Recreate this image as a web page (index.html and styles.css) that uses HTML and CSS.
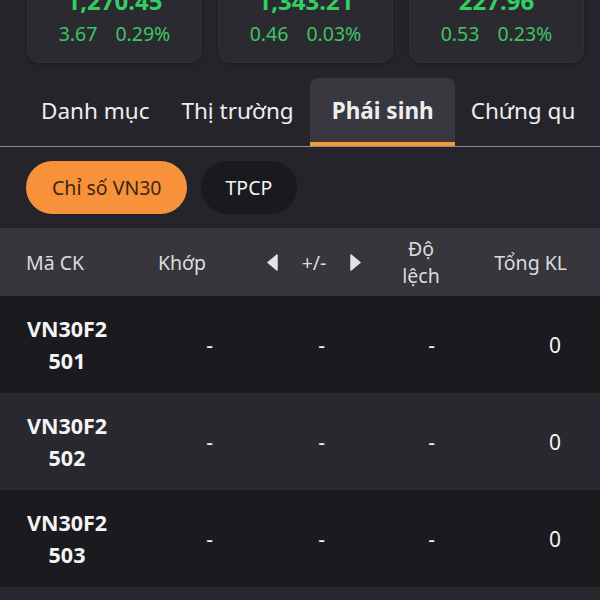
FILE: index.html
```html
<!DOCTYPE html>
<html lang="vi">
<head>
<meta charset="utf-8">
<link rel="stylesheet" href="styles.css">
</head>
<body>
<div class="cards">
  <div class="card"><div class="val">1,270.45</div><div class="chg"><span>3.67</span><span>0.29%</span></div></div>
  <div class="card"><div class="val">1,343.21</div><div class="chg"><span>0.46</span><span>0.03%</span></div></div>
  <div class="card"><div class="val">227.96</div><div class="chg"><span>0.53</span><span>0.23%</span></div></div>
</div>

<div class="tabbar">
  <div class="tabs">
    <div class="tab">Danh mục</div>
    <div class="tab">Thị trường</div>
    <div class="tab active">Phái sinh</div>
    <div class="tab">Chứng quyền</div>
  </div>
</div>

<div class="pills">
  <div class="pill on">Chỉ số VN30</div>
  <div class="pill">TPCP</div>
</div>

<div class="thead">
  <div class="h c1">Mã CK</div>
  <div class="h c2">Khớp</div>
  <div class="h c3">
    <svg class="arr" width="11" height="17" viewBox="0 0 11 17"><path d="M10 1 L1 8.5 L10 16 Z" fill="#e4e4e6" stroke="#e4e4e6" stroke-linejoin="round" stroke-width="1.5"/></svg>
    <span>+/-</span>
    <svg class="arr" width="11" height="17" viewBox="0 0 11 17"><path d="M1 1 L10 8.5 L1 16 Z" fill="#e4e4e6" stroke="#e4e4e6" stroke-linejoin="round" stroke-width="1.5"/></svg>
  </div>
  <div class="h c4">Độ lệch</div>
  <div class="h c5">Tổng KL</div>
</div>

<div class="row dark">
  <div class="d1">VN30F2 501</div><div class="d2">-</div><div class="d3">-</div><div class="d4">-</div><div class="d5">0</div>
</div>
<div class="row light">
  <div class="d1">VN30F2 502</div><div class="d2">-</div><div class="d3">-</div><div class="d4">-</div><div class="d5">0</div>
</div>
<div class="row dark">
  <div class="d1">VN30F2 503</div><div class="d2">-</div><div class="d3">-</div><div class="d4">-</div><div class="d5">0</div>
</div>
<div class="row light"></div>
</body>
</html>
```
FILE: styles.css
```css
html, body {
  margin: 0;
  padding: 0;
  background: #25242a;
  font-family: "Noto Sans", "Open Sans", sans-serif;
  color: #ececee;
  overflow: hidden;
  height: 600px;
}

.cards {
  display: flex;
  gap: 16px;
  padding-left: 27px;
  margin-top: -24px;
}
.card {
  width: 175px;
  flex: none;
  background: #2b2a31;
  border: 1px solid #302f36;
  border-radius: 12px;
  box-sizing: border-box;
  padding: 9px 0 14px;
  text-align: center;
  box-shadow: 0 1px 3px rgba(0,0,0,0.25);
}
.val {
  font-weight: 700;
  font-size: 24px;
  line-height: 30px;
  color: #32cf62;
  margin-bottom: 4px;
}
.chg {
  display: flex;
  justify-content: center;
  gap: 18px;
  font-size: 19.5px;
  line-height: 28px;
  color: #3fc462;
}

.tabbar {
  margin-top: 15px;
  border-bottom: 1.5px solid #8d8c92;
}
.tabs {
  display: flex;
  padding-left: 26px;
  margin-right: 25px;
  overflow: hidden;
  height: 68px;
}
.tab {
  flex: none;
  padding: 18px 16px 20px;
  font-size: 22.5px;
  line-height: 30px;
  color: #eeeeef;
  white-space: nowrap;
}
.tab:first-child { padding-left: 15px; }
.tab.active {
  padding: 18px 21px 20px 22px;
  background: #39383e;
  border-radius: 8px 8px 0 0;
  font-weight: 700;
  box-shadow: inset 0 -4px 0 #f39a31;
}

.pills {
  display: flex;
  gap: 14px;
  padding-left: 26px;
  margin-top: 14px;
}
.pill {
  height: 53px;
  border-radius: 27px;
  padding: 0 25px;
  display: flex;
  align-items: center;
  font-size: 19.5px;
  background: #1a191e;
  color: #f2f2f3;
}
.pill.on {
  background: #f8923a;
  color: #3a2512;
  padding: 0 25px 0 26px;
}

.thead {
  margin-top: 14px;
  height: 68px;
  background: #37363c;
  display: flex;
  align-items: center;
  padding-left: 26px;
  font-size: 19.5px;
  color: #dcdcde;
}
.h { flex: none; line-height: 27px; }
.c1 { width: 100px; }
.c2 { width: 112px; text-align: center; }
.c3 {
  width: 152px;
  display: flex;
  justify-content: center;
  align-items: center;
  gap: 24px;
}
.c4 { width: 62px; text-align: center; }
.c5 { flex: 1; text-align: right; padding-right: 33px; }

.row {
  height: 97px;
  display: flex;
  align-items: center;
  padding-left: 25px;
  font-size: 21px;
  color: #f4f4f5;
}
.row.dark { background: #1b1a1f; }
.row.light { background: #29282e; }
.row:nth-of-type(3) { height: 96px; }
.d1 {
  width: 84px;
  flex: none;
  text-align: center;
  font-weight: 700;
  font-size: 21.5px;
  line-height: 32px;
}
.d2, .d3, .d4, .d5 { flex: none; text-align: right; }
.d2 { width: 104px; }
.d3 { width: 112px; }
.d4 { width: 110px; }
.d5 { width: 126px; }
```
